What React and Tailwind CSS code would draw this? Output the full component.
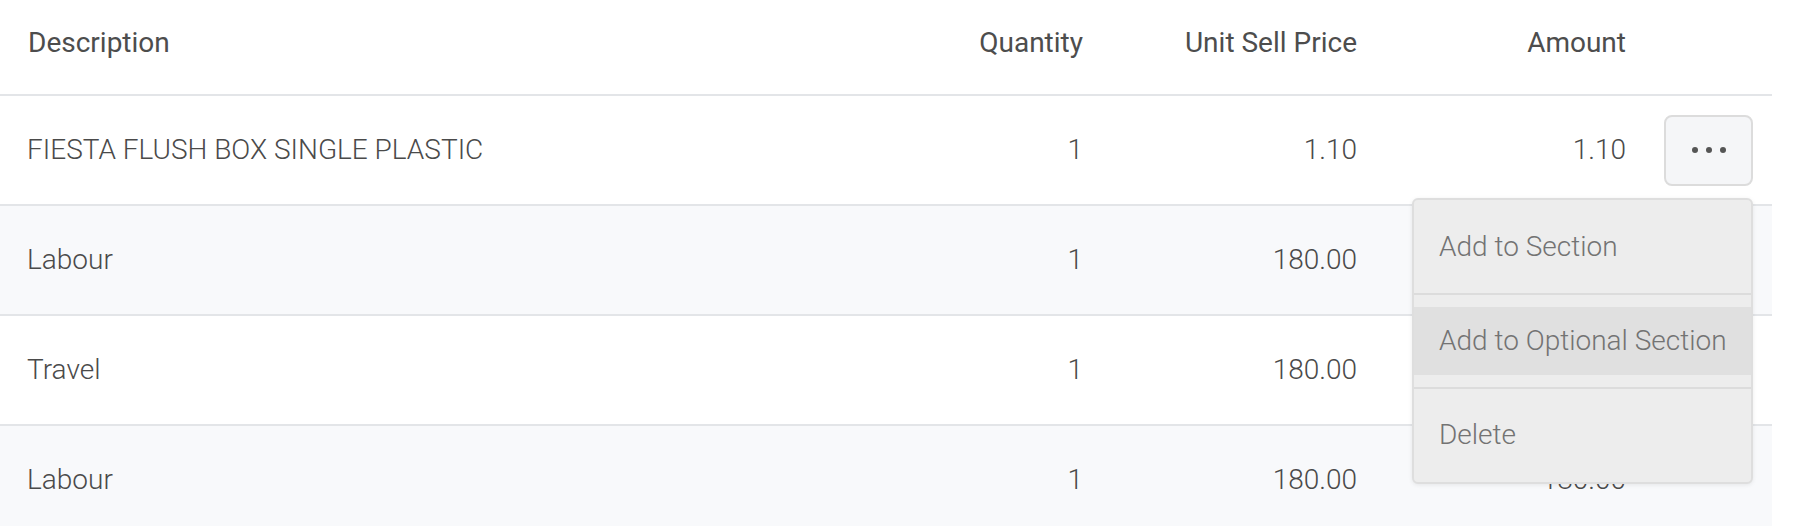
import React from "react";

const rows = [
  { desc: "FIESTA FLUSH BOX SINGLE PLASTIC", qty: "1", price: "1.10", amount: "1.10" },
  { desc: "Labour", qty: "1", price: "180.00", amount: "180.00" },
  { desc: "Travel", qty: "1", price: "180.00", amount: "180.00" },
  { desc: "Labour", qty: "1", price: "180.00", amount: "180.00" },
];

function Menu() {
  return (
    <div className="absolute right-[19px] top-[102px] z-10 w-[341px] rounded-[6px] border-2 border-[#dedede] bg-[#ededed] py-[13px] shadow-[0_1px_4px_rgba(0,0,0,0.08)]">
      <div className="flex h-[68px] items-center whitespace-nowrap pl-[25px] text-[28px] font-light text-[#737373]">Add to Section</div>
      <div className="my-[12px] h-[2px] bg-[#dcdcdc]" />
      <div className="flex h-[68px] items-center whitespace-nowrap bg-[#e0e0e0] pl-[25px] text-[28px] font-light text-[#737373]">Add to Optional Section</div>
      <div className="my-[12px] h-[2px] bg-[#dcdcdc]" />
      <div className="flex h-[68px] items-center whitespace-nowrap pl-[25px] text-[28px] font-light text-[#737373]">Delete</div>
    </div>
  );
}

export default function App() {
  return (
    <div className="h-[526px] w-[1806px] overflow-hidden bg-white" style={{ fontFamily: "Roboto, 'Liberation Sans', sans-serif" }}>
      <div className="relative w-[1772px]">
        <div className="grid h-[96px] grid-cols-[1fr_200px_274px_269px_146px] items-center border-b-2 border-[#e3e5e8] pb-[8px] text-[28px] text-[#4d4d4d]">
          <div className="pl-[28px]">Description</div>
          <div className="text-right">Quantity</div>
          <div className="text-right">Unit Sell Price</div>
          <div className="text-right">Amount</div>
          <div />
        </div>
        {rows.map((r, i) => (
          <div
            key={i}
            className={`relative grid h-[110px] grid-cols-[1fr_200px_274px_269px_146px] items-center border-b-2 border-[#e3e5e8] text-[28px] font-light text-[#4a4a4a] ${i % 2 === 1 ? "bg-[#f8f9fb]" : "bg-white"}`}
          >
            <div className="pl-[27px]">{r.desc}</div>
            <div className="text-right">{r.qty}</div>
            <div className="text-right">{r.price}</div>
            <div className="text-right">{r.amount}</div>
            <div className="flex justify-end pr-[19px]">
              {i === 0 && (
                <button className="flex h-[71px] w-[89px] items-center justify-center gap-[8px] rounded-[8px] border-2 border-[#dcdcdc] bg-[#f5f6f8]">
                  <span className="h-[6px] w-[6px] rounded-full bg-[#555]" />
                  <span className="h-[6px] w-[6px] rounded-full bg-[#555]" />
                  <span className="h-[6px] w-[6px] rounded-full bg-[#555]" />
                </button>
              )}
            </div>
            {i === 0 && <Menu />}
          </div>
        ))}
      </div>
    </div>
  );
}
